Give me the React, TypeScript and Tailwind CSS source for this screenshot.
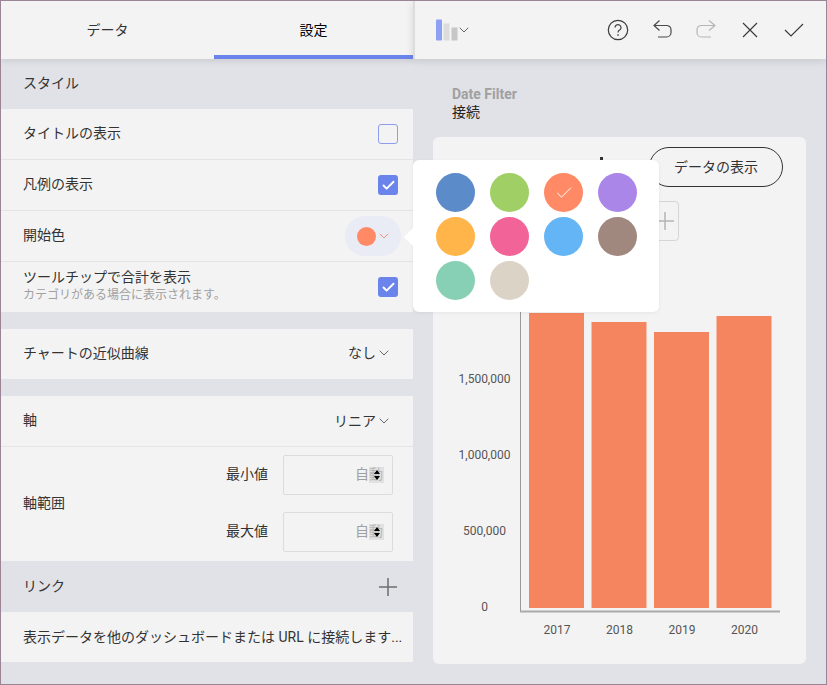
import { Check, ChevronDown } from 'lucide-react';

const swatches = ['#5b8bc8', '#9fcf65', '#ff8a65', '#a986e8', '#ffb54a', '#f26497', '#64b5f6', '#a1887f', '#88d0b5', '#dcd3c7'];
const bars = [
  { year: '2017', x: 96, top: 1 },
  { year: '2018', x: 158.5, top: 10 },
  { year: '2019', x: 221, top: 20 },
  { year: '2020', x: 283.5, top: 4 },
];
const ticks = [
  { label: '1,500,000', y: 71 },
  { label: '1,000,000', y: 147 },
  { label: '500,000', y: 223 },
  { label: '0', y: 299 },
];

function Checkbox({ checked }: { checked: boolean }) {
  if (!checked) return <div className="w-5 h-5 rounded-[3px] border-[1.5px] border-[#8c9df0]" />;
  return (
    <div className="w-5 h-5 rounded-[3px] bg-[#6b84ec] flex items-center justify-center">
      <Check size={15} strokeWidth={3} className="text-white" />
    </div>
  );
}

function Row({ label, children }: { label: string; children?: React.ReactNode }) {
  return (
    <div className="h-[51px] shrink-0 flex items-center justify-between pl-[22px] pr-[15px] bg-[#f3f3f4] border-b border-[#e3e3e8]">
      <span className="-mt-[2px]">{label}</span>
      {children}
    </div>
  );
}

function Dropdown({ value }: { value: string }) {
  return (
    <div className="flex items-center pr-[7px]">
      <span>{value}</span>
      <ChevronDown size={16} strokeWidth={1.1} className="-mr-[1px]" />
    </div>
  );
}

function RangeField({ label }: { label: string }) {
  return (
    <div className="flex items-center gap-[15px]">
      <span>{label}</span>
      <div className="relative w-[110px] h-10 border border-[#dcdcdc] rounded-[2px] flex items-center justify-end pr-[9px] text-[#a0a0a0]">
        <span>自動</span>
        <div className="absolute right-[8px] top-[11px] w-[15px] h-[16px] bg-[#cfcfcf]/50 flex flex-col items-center justify-center gap-[2px]">
          <div className="w-0 h-0 border-x-[3px] border-x-transparent border-b-[4px] border-b-black" />
          <div className="w-0 h-0 border-x-[3px] border-x-transparent border-t-[4px] border-t-black" />
        </div>
      </div>
    </div>
  );
}

function Toolbar() {
  return (
    <div className="relative z-10 h-[58px] shrink-0 flex items-center justify-between bg-[#f3f3f4] border-l-2 border-[#dcdcdc] pl-[21px] pr-[21px] shadow-[0_2px_8px_rgba(0,0,0,0.12)]">
      <div className="flex items-end">
        <svg width="22" height="22" viewBox="0 0 22 22">
          <rect x="0" y="0.5" width="6" height="21" rx="1" fill="#8da0f3" />
          <rect x="7.5" y="4.5" width="6" height="17" fill="#dcdcdc" />
          <rect x="15.5" y="8.5" width="6" height="13" fill="#c6c6c6" />
        </svg>
        <ChevronDown size={16} strokeWidth={1.1} className="mb-[3px] -ml-[2px] text-[#333]" />
      </div>
      <div className="flex items-center gap-[22px]">
        <svg width="22" height="22" viewBox="0 0 22 22" fill="none" stroke="#3b3b3b" strokeWidth="1.2">
          <circle cx="11" cy="11" r="9.7" />
          <path d="M8 8.6a3 3 0 1 1 4.6 2.5c-1 .6-1.6 1.2-1.6 2.4" />
          <path d="M11 15.2v1.6" strokeWidth="1.4" />
        </svg>
        <svg width="22" height="22" viewBox="0 0 22 22" fill="none" stroke="#4a4a4a" strokeWidth="1.2">
          <path d="M8.5 1.5 3 6.5l5.5 5M3 6.5h13a4.5 4.5 0 0 1 4 4.5v2.5a4.5 4.5 0 0 1-4.5 4.5H7" />
        </svg>
        <svg width="22" height="22" viewBox="0 0 22 22" fill="none" stroke="#b5b5b5" strokeWidth="1.2">
          <path d="M14 1.5 20 6.5l-6 5M20 6.5H6a4.5 4.5 0 0 0-4 4.5v2.5a4.5 4.5 0 0 0 4.5 4.5H16" />
        </svg>
        <svg width="22" height="22" viewBox="0 0 22 22" fill="none" stroke="#3b3b3b" strokeWidth="1.2">
          <path d="M4 4l14 14M18 4 4 18" />
        </svg>
        <svg width="22" height="22" viewBox="0 0 22 22" fill="none" stroke="#3b3b3b" strokeWidth="1.2">
          <path d="M2 11l6 6L20 5" />
        </svg>
      </div>
    </div>
  );
}

function Chart() {
  return (
    <svg width="373" height="340" viewBox="0 0 373 340" className="mt-auto mb-[12px] shrink-0 font-['Roboto',sans-serif]">
      {bars.map((b) => (
        <g key={b.year}>
          <rect x={b.x} y={b.top} width="55" height={296 - b.top} fill="#f5855f" />
          <text x={b.x + 28} y={322} textAnchor="middle" fontSize="12" fill="#555">{b.year}</text>
        </g>
      ))}
      {ticks.map((t) => (
        <text key={t.label} x="51.5" y={t.y} textAnchor="middle" fontSize="12" fill="#555">{t.label}</text>
      ))}
      <path d="M87.5 0V300" stroke="#999" strokeWidth="1" fill="none" />
      <path d="M87 299.5H347" stroke="#aaa" strokeWidth="2" fill="none" />
    </svg>
  );
}

export default function App() {
  return (
    <div className="relative w-[827px] h-[685px] overflow-hidden flex border border-[#9b8496] bg-[#e1e2e7] text-[14px] text-[#333] font-['Roboto','Noto_Sans_CJK_JP',sans-serif]">
      {/* Left settings panel */}
      <div className="w-[412px] shrink-0 flex flex-col">
        <div className="relative z-10 h-[58px] shrink-0 flex bg-[#f3f3f4] shadow-[0_2px_6px_rgba(0,0,0,0.1)]">
          <div className="w-[213px] flex items-center justify-center">データ</div>
          <div className="flex-1 flex items-center justify-center pt-1 text-black border-b-4 border-[#6b84ec]">設定</div>
        </div>
        <div className="h-[50px] shrink-0 flex items-center pl-[22px]">
          <span className="-mt-[2px]">スタイル</span>
        </div>
        <Row label="タイトルの表示"><Checkbox checked={false} /></Row>
        <Row label="凡例の表示"><Checkbox checked /></Row>
        <Row label="開始色">
          <div className="w-14 h-10 -mr-[3px] rounded-full bg-[#e9ecf4] flex items-center justify-center">
            <div className="w-[19px] h-[19px] ml-[3px] rounded-full bg-[#ff8a65]" />
            <ChevronDown size={16} strokeWidth={1.4} className="text-[#ff8a65]" />
          </div>
        </Row>
        <div className="h-[50px] shrink-0 flex items-center justify-between pl-[22px] pr-[15px] bg-[#f3f3f4]">
          <div className="flex flex-col -mt-[2px]">
            <span className="leading-[18px]">ツールチップで合計を表示</span>
            <span className="text-[12px] leading-[18px] text-[#a0a0a0]">カテゴリがある場合に表示されます。</span>
          </div>
          <Checkbox checked />
        </div>
        <div className="h-[17px] shrink-0" />
        <div className="h-[50px] shrink-0 flex items-center justify-between pl-[22px] pr-[15px] bg-[#f3f3f4] pb-[2px]">
          <span>チャートの近似曲線</span>
          <Dropdown value="なし" />
        </div>
        <div className="h-[17px] shrink-0" />
        <Row label="軸"><Dropdown value="リニア" /></Row>
        <div className="h-[114px] shrink-0 flex items-center justify-between pl-[22px] pr-[20px] pb-[2px] bg-[#f3f3f4]">
          <span>軸範囲</span>
          <div className="flex flex-col gap-[17px] items-end">
            <RangeField label="最小値" />
            <RangeField label="最大値" />
          </div>
        </div>
        <div className="h-[51px] shrink-0 flex items-center justify-between pl-[22px] pr-[15px]">
          <span>リンク</span>
          <svg width="18" height="18" viewBox="0 0 18 18" fill="none" stroke="#6e6e6e" strokeWidth="1.5" className="mr-[1px]">
            <path d="M9 0v18M0 9h18" />
          </svg>
        </div>
        <div className="h-[50px] shrink-0 flex items-center pl-[22px] bg-[#f3f3f4]">
          表示データを他のダッシュボードまたは URL に接続します...
        </div>
      </div>

      {/* Right chart preview */}
      <div className="flex-1 flex flex-col">
        <Toolbar />
        <div className="flex-1 flex flex-col pl-[20px] pr-[20px] pb-[20px]">
          <div className="h-[78px] shrink-0 pt-[26px] pl-[19px]">
            <div className="leading-[18px] font-bold text-[#a0a0a0]">Date Filter</div>
            <div className="leading-[19px] text-[#222]">接続</div>
          </div>
          <div className="relative flex-1 flex flex-col rounded-[6px] bg-[#f3f3f4]">
            <div className="absolute left-[167px] top-[20px] w-[3px] h-[4px] bg-[#333]" />
            <div className="flex justify-end pt-[10px] pr-[23px]">
              <div className="w-[134px] h-10 rounded-full border border-[#333] flex items-center justify-center">データの表示</div>
            </div>
            <div className="flex justify-end pt-[14px] pr-[127px]">
              <div className="w-10 h-10 rounded-[4px] border border-[#d5d5d5] flex items-center justify-end pr-[4px]">
                <svg width="18" height="18" viewBox="0 0 18 18" stroke="#b5b5b5" strokeWidth="1.5"><path d="M9 0v18M0 9h18" /></svg>
              </div>
            </div>
            <Chart />
          </div>
        </div>
      </div>

      {/* Colour picker popover */}
      <div className="absolute z-20 left-[412px] top-[159px] w-[246px] h-[152px] rounded-[6px] bg-white shadow-[0_1px_4px_rgba(0,0,0,0.06)] pl-[23px] pt-[13px]">
        <div className="absolute left-[-9px] top-[67px] w-0 h-0 border-y-[10px] border-y-transparent border-r-[10px] border-r-white" />
        <div className="grid grid-cols-[39px_39px_39px_39px] gap-x-[15px] gap-y-[5px]">
          {swatches.map((c, i) => (
            <div key={c} className="w-[39px] h-[39px] rounded-full flex items-center justify-center" style={{ backgroundColor: c }}>
              {i === 2 && <Check size={20} strokeWidth={1.2} className="text-white" />}
            </div>
          ))}
        </div>
      </div>
    </div>
  );
}
